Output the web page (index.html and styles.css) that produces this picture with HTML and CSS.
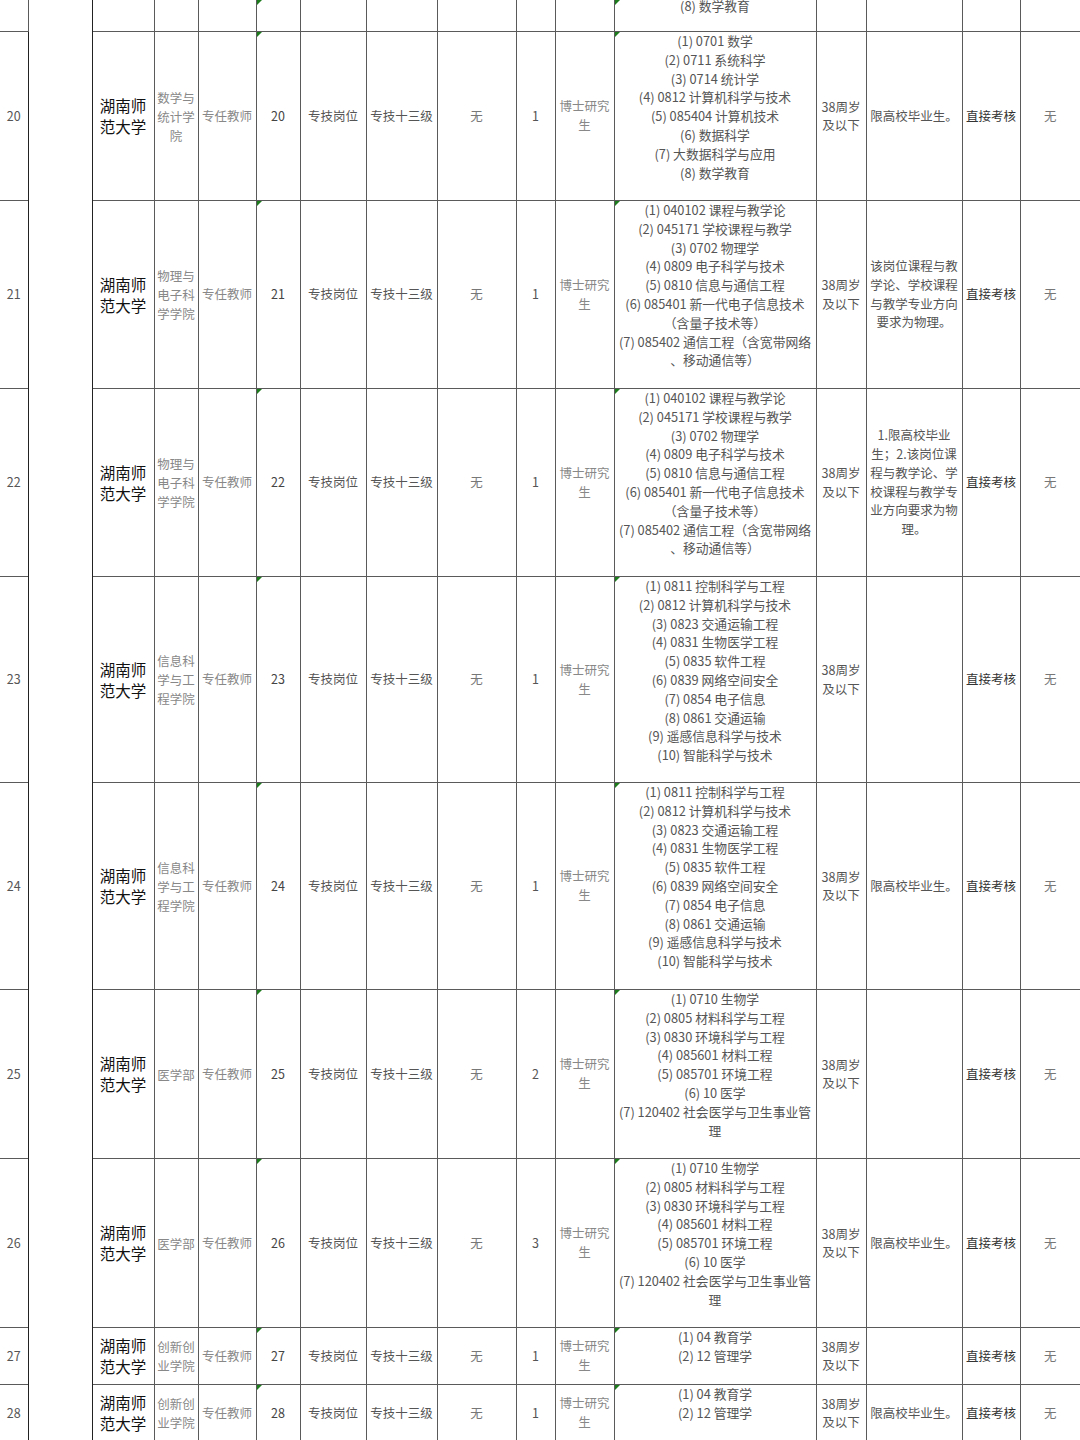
FILE: index.html
```html
<!DOCTYPE html>
<html lang="zh-CN">
<head>
<meta charset="utf-8">
<title>岗位表</title>
<link rel="stylesheet" href="styles.css">
</head>
<body>
<table class="grid">
<colgroup>
<col class="c1"><col class="c2"><col class="c3"><col class="c4"><col class="c5"><col class="c6"><col class="c7"><col class="c8"><col class="c9"><col class="c10"><col class="c11"><col class="c12"><col class="c13"><col class="c14"><col class="c15"><col class="c16">
</colgroup>
<tbody>
<tr class="h31">
<td class="idx"></td>
<td class="blank" rowspan="10"></td>
<td></td><td></td><td></td><td class="mark"></td><td></td><td></td><td></td><td></td><td></td>
<td class="mark tail">(8) 数学教育</td>
<td></td><td></td><td></td><td></td>
</tr>

<tr class="h169">
<td class="idx">20</td>
<td class="uni">湖南师范大学</td>
<td class="dept">数学与统计学院</td>
<td class="light">专任教师</td>
<td class="mark num">20</td>
<td>专技岗位</td>
<td>专技十三级</td>
<td class="none">无</td>
<td>1</td>
<td class="light">博士研究生</td>
<td class="mark list">(1) 0701 数学<br>(2) 0711 系统科学<br>(3) 0714 统计学<br>(4) 0812 计算机科学与技术<br>(5) 085404 计算机技术<br>(6) 数据科学<br>(7) 大数据科学与应用<br>(8) 数学教育</td>
<td class="age">38周岁及以下</td>
<td class="req">限高校毕业生。</td>
<td class="way">直接考核</td>
<td class="none">无</td>
</tr>

<tr class="h188">
<td class="idx">21</td>
<td class="uni">湖南师范大学</td>
<td class="dept">物理与电子科学学院</td>
<td class="light">专任教师</td>
<td class="mark num">21</td>
<td>专技岗位</td>
<td>专技十三级</td>
<td class="none">无</td>
<td>1</td>
<td class="light">博士研究生</td>
<td class="mark list">(1) 040102 课程与教学论<br>(2) 045171 学校课程与教学<br>(3) 0702 物理学<br>(4) 0809 电子科学与技术<br>(5) 0810 信息与通信工程<br>(6) 085401 新一代电子信息技术<br>（含量子技术等）<br>(7) 085402 通信工程（含宽带网络<br>、移动通信等）</td>
<td class="age">38周岁及以下</td>
<td class="req">该岗位课程与教学论、学校课程与教学专业方向要求为物理。</td>
<td class="way">直接考核</td>
<td class="none">无</td>
</tr>

<tr class="h188">
<td class="idx">22</td>
<td class="uni">湖南师范大学</td>
<td class="dept">物理与电子科学学院</td>
<td class="light">专任教师</td>
<td class="mark num">22</td>
<td>专技岗位</td>
<td>专技十三级</td>
<td class="none">无</td>
<td>1</td>
<td class="light">博士研究生</td>
<td class="mark list">(1) 040102 课程与教学论<br>(2) 045171 学校课程与教学<br>(3) 0702 物理学<br>(4) 0809 电子科学与技术<br>(5) 0810 信息与通信工程<br>(6) 085401 新一代电子信息技术<br>（含量子技术等）<br>(7) 085402 通信工程（含宽带网络<br>、移动通信等）</td>
<td class="age">38周岁及以下</td>
<td class="req">1.限高校毕业<br>生；2.该岗位课<br>程与教学论、学<br>校课程与教学专<br>业方向要求为物<br>理。</td>
<td class="way">直接考核</td>
<td class="none">无</td>
</tr>

<tr class="h206">
<td class="idx">23</td>
<td class="uni">湖南师范大学</td>
<td class="dept">信息科学与工程学院</td>
<td class="light">专任教师</td>
<td class="mark num">23</td>
<td>专技岗位</td>
<td>专技十三级</td>
<td class="none">无</td>
<td>1</td>
<td class="light">博士研究生</td>
<td class="mark list">(1) 0811 控制科学与工程<br>(2) 0812 计算机科学与技术<br>(3) 0823 交通运输工程<br>(4) 0831 生物医学工程<br>(5) 0835 软件工程<br>(6) 0839 网络空间安全<br>(7) 0854 电子信息<br>(8) 0861 交通运输<br>(9) 遥感信息科学与技术<br>(10) 智能科学与技术</td>
<td class="age">38周岁及以下</td>
<td class="req"></td>
<td class="way">直接考核</td>
<td class="none">无</td>
</tr>

<tr class="h207">
<td class="idx">24</td>
<td class="uni">湖南师范大学</td>
<td class="dept">信息科学与工程学院</td>
<td class="light">专任教师</td>
<td class="mark num">24</td>
<td>专技岗位</td>
<td>专技十三级</td>
<td class="none">无</td>
<td>1</td>
<td class="light">博士研究生</td>
<td class="mark list">(1) 0811 控制科学与工程<br>(2) 0812 计算机科学与技术<br>(3) 0823 交通运输工程<br>(4) 0831 生物医学工程<br>(5) 0835 软件工程<br>(6) 0839 网络空间安全<br>(7) 0854 电子信息<br>(8) 0861 交通运输<br>(9) 遥感信息科学与技术<br>(10) 智能科学与技术</td>
<td class="age">38周岁及以下</td>
<td class="req">限高校毕业生。</td>
<td class="way">直接考核</td>
<td class="none">无</td>
</tr>

<tr class="h169">
<td class="idx">25</td>
<td class="uni">湖南师范大学</td>
<td class="dept">医学部</td>
<td class="light">专任教师</td>
<td class="mark num">25</td>
<td>专技岗位</td>
<td>专技十三级</td>
<td class="none">无</td>
<td>2</td>
<td class="light">博士研究生</td>
<td class="mark list">(1) 0710 生物学<br>(2) 0805 材料科学与工程<br>(3) 0830 环境科学与工程<br>(4) 085601 材料工程<br>(5) 085701 环境工程<br>(6) 10 医学<br>(7) 120402 社会医学与卫生事业管<br>理</td>
<td class="age">38周岁及以下</td>
<td class="req"></td>
<td class="way">直接考核</td>
<td class="none">无</td>
</tr>

<tr class="h169">
<td class="idx">26</td>
<td class="uni">湖南师范大学</td>
<td class="dept">医学部</td>
<td class="light">专任教师</td>
<td class="mark num">26</td>
<td>专技岗位</td>
<td>专技十三级</td>
<td class="none">无</td>
<td>3</td>
<td class="light">博士研究生</td>
<td class="mark list">(1) 0710 生物学<br>(2) 0805 材料科学与工程<br>(3) 0830 环境科学与工程<br>(4) 085601 材料工程<br>(5) 085701 环境工程<br>(6) 10 医学<br>(7) 120402 社会医学与卫生事业管<br>理</td>
<td class="age">38周岁及以下</td>
<td class="req">限高校毕业生。</td>
<td class="way">直接考核</td>
<td class="none">无</td>
</tr>

<tr class="h57">
<td class="idx">27</td>
<td class="uni">湖南师范大学</td>
<td class="dept">创新创业学院</td>
<td class="light">专任教师</td>
<td class="mark num">27</td>
<td>专技岗位</td>
<td>专技十三级</td>
<td class="none">无</td>
<td>1</td>
<td class="light">博士研究生</td>
<td class="mark list">(1) 04 教育学<br>(2) 12 管理学</td>
<td class="age">38周岁及以下</td>
<td class="req"></td>
<td class="way">直接考核</td>
<td class="none">无</td>
</tr>

<tr class="h57">
<td class="idx">28</td>
<td class="uni">湖南师范大学</td>
<td class="dept">创新创业学院</td>
<td class="light">专任教师</td>
<td class="mark num">28</td>
<td>专技岗位</td>
<td>专技十三级</td>
<td class="none">无</td>
<td>1</td>
<td class="light">博士研究生</td>
<td class="mark list">(1) 04 教育学<br>(2) 12 管理学</td>
<td class="age">38周岁及以下</td>
<td class="req">限高校毕业生。</td>
<td class="way">直接考核</td>
<td class="none">无</td>
</tr>
</tbody>
</table>
</body>
</html>
```

FILE: styles.css
```css
html, body {
  margin: 0;
  padding: 0;
  background: #ffffff;
}

body {
  font-family: "Noto Sans CJK SC", "Noto Sans", sans-serif;
  font-size: 12.5px;
  color: #555;
  overflow: hidden;
}

.grid {
  border-collapse: collapse;
  table-layout: fixed;
  width: 1080px;
}

.c1 { width: 28px; }
.c2 { width: 64px; }
.c3 { width: 62px; }
.c4 { width: 44px; }
.c5 { width: 58px; }
.c6 { width: 44px; }
.c7 { width: 66px; }
.c8 { width: 71px; }
.c9 { width: 79px; }
.c10 { width: 39px; }
.c11 { width: 59px; }
.c12 { width: 202px; }
.c13 { width: 50px; }
.c14 { width: 96px; }
.c15 { width: 58px; }
.c16 { width: 60px; }

.grid td {
  border: 1px solid #5a5a5a;
  padding: 0 2px;
  text-align: center;
  vertical-align: middle;
  line-height: 18.8px;
  word-break: break-all;
  overflow: hidden;
}

.grid tr td:first-child {
  border-left: none;
}

.grid tr td:last-child {
  border-right: none;
}

.grid tr:first-child td {
  border-top: none;
}

.h31 { height: 31px; }
.h57 { height: 57px; }
.h169 { height: 169px; }
.h188 { height: 188px; }
.h206 { height: 206px; }
.h207 { height: 207px; }

.grid td.idx {
  color: #555;
}

.grid td.blank {
  border-color: #222;
}

.grid td.uni {
  color: #111;
  font-size: 15.5px;
  line-height: 21px;
  padding: 0 6px;
}

.grid td.dept {
  color: #888;
  line-height: 19px;
  padding: 0 1px;
}

.grid td.light {
  color: #888;
}

.grid td.num {
  color: #444;
}

.grid td.none {
  color: #777;
}

.grid td.list {
  vertical-align: top;
  color: #555;
  white-space: nowrap;
  font-size: 12.8px;
}

.grid td.tail {
  vertical-align: bottom;
  line-height: 12px;
  padding-bottom: 19px;
  color: #555;
  white-space: nowrap;
  font-size: 12.8px;
}

.grid td.age {
  color: #555;
  line-height: 18.5px;
  padding: 0 2px;
}

.grid td.req {
  color: #555;
}

.grid td.way {
  color: #333;
}

.grid td.mark {
  position: relative;
}

.grid td.mark::before {
  content: "";
  position: absolute;
  top: 0;
  left: 0;
  width: 0;
  height: 0;
  border-top: 5px solid #1d7a1d;
  border-right: 5px solid transparent;
}
```
